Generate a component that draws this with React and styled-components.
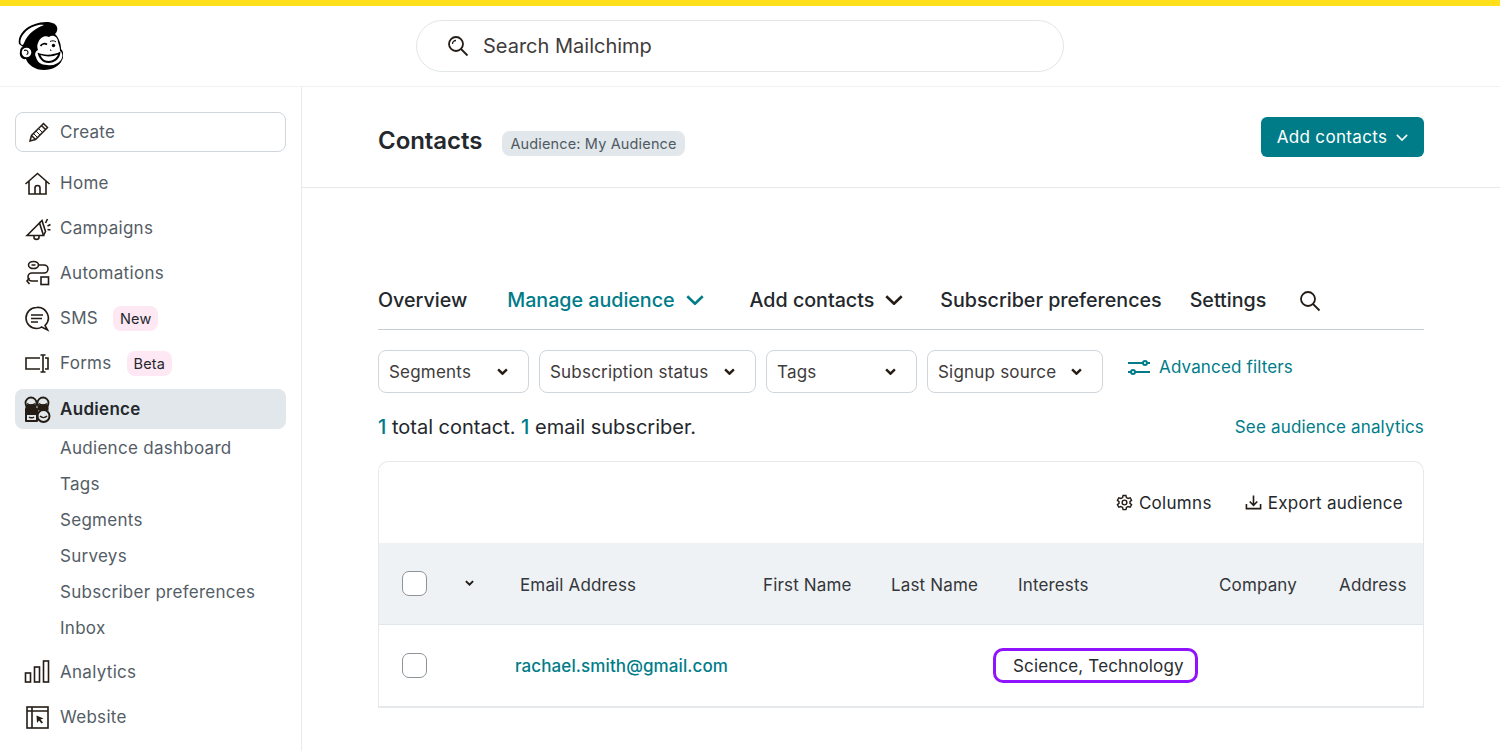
import React from "react";
import styled, { createGlobalStyle } from "styled-components";

const GlobalStyle = createGlobalStyle`
  * { box-sizing: border-box; }
  html, body { margin: 0; padding: 0; background: #fff; }
  body { font-family: Inter, "Liberation Sans", sans-serif; color: #24282c; overflow: hidden; }
`;

const teal = "#007c89";
const ink = "#241c15";
const textDark = "#24282c";

const Page = styled.div`
  width: 1500px;
  height: 751px;
  display: flex;
  flex-direction: column;
  border-top: 6px solid #ffe01b;
  overflow: hidden;
`;

const TopBar = styled.header`
  flex: 0 0 81px;
  display: flex;
  align-items: center;
  padding: 0 0 1px 17px;
  border-bottom: 1px solid #eff2f5;
`;

const LogoSlot = styled.div`
  width: 399px;
  flex: none;
  display: flex;
`;

const SearchBox = styled.div`
  width: 648px;
  height: 52px;
  border: 1px solid #e2e6e9;
  border-radius: 26px;
  display: flex;
  align-items: center;
  gap: 14px;
  padding-left: 30px;
  font-size: 20px;
  color: #403b3b;
`;

const SearchLabel = styled.span`
  padding-top: 1px;
`;

const Body = styled.div`
  flex: 1;
  display: flex;
  min-height: 0;
`;

const Sidebar = styled.nav`
  flex: 0 0 302px;
  border-right: 1px solid #e8ebed;
  padding: 25px 15px 0;
`;

const CreateButton = styled.div`
  height: 40px;
  width: 271px;
  border: 1px solid #cfd6db;
  border-radius: 8px;
  display: flex;
  align-items: center;
  gap: 10px;
  padding-left: 12px;
  margin-bottom: 11px;
  font-size: 17px;
  letter-spacing: 0.3px;
  color: #545d66;
`;

const NavItem = styled.div`
  height: 40px;
  width: 271px;
  margin-top: ${({ $active }) => ($active ? 6 : 0)}px;
  margin-bottom: ${({ $tight }) => ($tight ? 0 : 5)}px;
  border-radius: 8px;
  display: flex;
  align-items: center;
  padding-left: 9px;
  gap: 9px;
  font-size: 17px;
  letter-spacing: 0.3px;
  font-weight: ${({ $active }) => ($active ? 600 : 400)};
  color: ${({ $active }) => ($active ? textDark : "#545d66")};
  background: ${({ $active }) => ($active ? "#e1e7ea" : "transparent")};
`;

const IconSlot = styled.span`
  width: 27px;
  height: 27px;
  flex: none;
  display: flex;
`;

const NavBadge = styled.span`
  margin-left: 6px;
  height: 25px;
  padding: 0 7px;
  display: flex;
  align-items: center;
  border-radius: 8px;
  background: #fde8f4;
  color: ${textDark};
  font-size: 14.5px;
  letter-spacing: 0.1px;
`;

const SubList = styled.div`
  margin-top: 1px;
  margin-bottom: 6px;
`;

const SubItem = styled.div`
  height: 36px;
  display: flex;
  align-items: center;
  padding-left: 45px;
  font-size: 17px;
  letter-spacing: 0.28px;
  color: #545d66;
`;

const Main = styled.main`
  flex: 1;
  min-width: 0;
`;

const PageHead = styled.div`
  height: 101px;
  border-bottom: 1px solid #e6e9eb;
  padding: 0 76px 0 76px;
  display: flex;
  align-items: center;
`;

const Title = styled.h1`
  margin: 6px 20px 0 0;
  font-size: 24px;
  font-weight: 600;
  letter-spacing: -0.05px;
  color: ${textDark};
`;

const AudienceBadge = styled.span`
  margin-top: 13px;
  height: 25px;
  padding: 0 8px;
  display: flex;
  align-items: center;
  border-radius: 8px;
  background: #e1e7ea;
  color: #4f5a63;
  font-size: 14.5px;
  letter-spacing: 0.15px;
`;

const PrimaryButton = styled.div`
  margin-left: auto;
  width: 163px;
  height: 40px;
  border-radius: 6px;
  background: ${teal};
  color: #fff;
  font-size: 17px;
  letter-spacing: 0.35px;
  display: flex;
  align-items: center;
  justify-content: center;
  gap: 9px;
`;

const Content = styled.div`
  padding: 91px 76px 0;
`;

const Tabs = styled.div`
  height: 51px;
  border-bottom: 1px solid #c7ced3;
  display: flex;
  align-items: center;
  padding-bottom: 9px;
`;

const Tab = styled.div`
  display: flex;
  align-items: center;
  gap: 11px;
  font-size: 19.7px;
  font-weight: 500;
  letter-spacing: -0.02px;
  margin-right: ${({ $gap }) => $gap}px;
  color: ${({ $current }) => ($current ? teal : textDark)};
`;

const TabSearch = styled.span`
  display: flex;
  margin-top: 3px;
`;

const Filters = styled.div`
  display: flex;
  align-items: flex-start;
  gap: 10px;
  margin-top: 20px;
`;

const FilterSelect = styled.div`
  width: ${({ $w }) => $w}px;
  height: 43px;
  border: 1px solid #cfd6db;
  border-radius: 8px;
  display: flex;
  align-items: center;
  justify-content: space-between;
  padding: 0 20px 0 10px;
  font-size: 17px;
  letter-spacing: 0.2px;
  color: #403b3b;
`;

const AdvancedLink = styled.div`
  margin-left: 14px;
  height: 33px;
  display: flex;
  align-items: center;
  gap: 8px;
  font-size: 17px;
  letter-spacing: 0.15px;
  color: ${teal};
`;

const CountRow = styled.div`
  margin-top: 19px;
  height: 30px;
  display: flex;
  align-items: center;
  justify-content: space-between;
`;

const CountText = styled.div`
  font-size: 20px;
  color: ${textDark};
  b { color: ${teal}; font-weight: 500; }
`;

const AnalyticsLink = styled.div`
  font-size: 17px;
  letter-spacing: 0.17px;
  color: ${teal};
`;

const Card = styled.div`
  margin-top: 19px;
  border: 1px solid #e6e9eb;
  border-bottom-width: 2px;
  border-radius: 10px 10px 0 0;
  overflow: hidden;
`;

const CardTools = styled.div`
  height: 81px;
  display: flex;
  align-items: center;
  justify-content: flex-end;
  gap: 33px;
  padding-right: 20px;
`;

const ToolButton = styled.div`
  display: flex;
  align-items: center;
  gap: 6px;
  font-size: 17px;
  letter-spacing: 0.3px;
  color: ${textDark};
`;

const columns = "76px 60px 243px 128px 127px 201px 120px 1fr";

const HeadRow = styled.div`
  height: 82px;
  display: grid;
  grid-template-columns: ${columns};
  align-items: center;
  background: #eff2f5;
  border-bottom: 1px solid #e1e7ea;
  font-size: 17px;
  letter-spacing: 0.15px;
  color: #33363a;
`;

const DataRow = styled.div`
  height: 81px;
  display: grid;
  grid-template-columns: ${columns};
  align-items: center;
  font-size: 17px;
`;

const HeadCell = styled.div`
  padding: 2px 0 0 5px;
  white-space: nowrap;
`;

const CheckCell = styled.div`
  padding-left: 23px;
  display: flex;
`;

const CheckBox = styled.span`
  width: 25px;
  height: 25px;
  border: 1px solid #8c9399;
  border-radius: 7px;
  background: #fff;
`;

const SortCell = styled.div`
  padding-left: 10px;
  display: flex;
`;

const EmailLink = styled.div`
  font-weight: 500;
  letter-spacing: 0.1px;
  color: ${teal};
  white-space: nowrap;
`;

const InterestCell = styled.div`
  grid-column: 6;
  display: flex;
`;

const InterestTag = styled.div`
  margin-left: -20px;
  height: 35px;
  width: 205px;
  border: 3px solid #9013fe;
  border-radius: 10px;
  display: flex;
  align-items: center;
  padding-left: 17px;
  font-size: 17px;
  letter-spacing: 0.15px;
  white-space: nowrap;
  color: #2a2c30;
`;

const Stroke = ({ children, size = 27, box = "0 0 27 27", width = 1.6, color = ink, ...rest }) => (
  <svg width={size} height={size} viewBox={box} fill="none" stroke={color} strokeWidth={width} {...rest}>
    {children}
  </svg>
);

const Chevron = ({ color = ink, w = 14, h = 8, sw = 2 }) => (
  <svg width={w} height={h} viewBox="0 0 14 8" fill="none" stroke={color} strokeWidth={sw} preserveAspectRatio="none">
    <path d="M1 1l6 6 6-6" />
  </svg>
);

const SmallChevron = ({ size = 10 }) => (
  <svg width={size} height={size * 0.7} viewBox="0 0 10 7" fill="none" stroke={ink} strokeWidth="2.2">
    <path d="M1 1.2l4 4 4-4" />
  </svg>
);

const Logo = () => (
  <svg width="46" height="48" viewBox="0 0 46 48">
    <path d="M2 22C0 14 8 5 18 2c8-3 20-3 22 3 1 4-1 6-2 7 4 4 6 10 6 15 3 3 3 8 1 11-2 6-10 10-18 10-9 0-16-5-18-11-4 1-7-3-6-7 0-3 1-5 3-5z" fill="#000" />
    <path d="M3.500 21c-1-6 5.500-14 14.500-17 4-1.500 7-1.500 9-1-8 3-16 8-20 18-1 3-3 2-3.500 0z" fill="#fff" />
    <circle cx="9.500" cy="30.500" r="4.800" fill="#fff" />
    <path d="M7 28.500c2-1 4 0 4 2 0 1-1 2-1.500 2" stroke="#000" strokeWidth="1.100" fill="none" />
    <path d="M21 21c2-6 7-8 11-6 4-3 9 0 9 5 1 3 2 6 2 9 3 2 3 6 1 9-3 4-8 6-14 5-6 0-10-3-11-8-2-3 0-6 2-7-1-3-1-5 0-7z" fill="#fff" />
    <path d="M23.500 24c1.500-2.500 4.500-3 6.500-1.500" stroke="#000" strokeWidth="1.600" fill="none" />
    <circle cx="36.500" cy="23.500" r="1.700" fill="#000" />
    <path d="M33 19.500c2-1 4.500-1 6 .5" stroke="#000" strokeWidth="1" fill="none" />
    <path d="M33.500 27.500l.5 1.500" stroke="#000" strokeWidth="1" fill="none" />
    <path d="M20.500 30.500c6 3 16 3 23-1 0 7-6 11.500-12 11.500-6 0-10-5-11-10.500z" fill="#000" />
    <path d="M23.500 33c5 2 12 2 17.500-.5-1 3-5 6.500-9.500 6.500-4 0-7-3-8-6z" fill="#fff" />
  </svg>
);

const HomeIcon = () => (
  <Stroke>
    <path d="M1.500 14L13.500 3.500 25.500 14M5 11.500V24h17V11.500" />
    <path d="M11 24v-6a2.500 2.500 0 015 0v6" />
  </Stroke>
);

const CampaignsIcon = () => (
  <Stroke>
    <path d="M3 20.500L15.500 8l4 12.500z" />
    <path d="M15.500 8l2.500-2.500 3.500 11-2 4" />
    <path d="M10 20.500v2c0 2.500 5 2.500 5 0v-2" />
    <path d="M21.500 8l2-4M23.500 11l3-1.500M23.500 14.500l3 .5" />
  </Stroke>
);

const AutomationsIcon = () => (
  <Stroke>
    <ellipse cx="9.500" cy="5" rx="5" ry="3.500" />
    <path d="M7.500 5h4M15 5h5a4 4 0 010 8H8a4 4 0 000 8h6" />
    <path d="M5.500 18l-2.500 3 2.500 3" />
    <rect x="17" y="17" width="7.500" height="7.500" />
  </Stroke>
);

const SmsIcon = () => (
  <Stroke>
    <path d="M12.500 2.500a10.500 10.500 0 100 21c2 0 4-.5 5-1.500l6 3-2.500-4.500a10.500 10.500 0 00-8.500-18z" />
    <path d="M7 10h12M7 13.500h11M7 17h7" />
  </Stroke>
);

const FormsIcon = () => (
  <Stroke>
    <path d="M16 8H2v11h14M21 8h3v11h-3" />
    <path d="M16.500 5h5M19 5v17M16.500 22h5" />
  </Stroke>
);

const AudienceIcon = () => (
  <svg width="27" height="27" viewBox="0 0 27 27">
    <rect x="1" y="12" width="13" height="14" rx="1" fill="#241c15" />
    <circle cx="7" cy="7" r="5.500" fill="#e1e7ea" stroke="#241c15" strokeWidth="1.800" />
    <circle cx="19" cy="7" r="5.500" fill="#e1e7ea" stroke="#241c15" strokeWidth="1.800" />
    <path d="M3 7.500c2 2 6 2 8 0M15 7.500c2 2 6 2 8 0" stroke="#241c15" strokeWidth="1.500" fill="none" />
    <rect x="1.500" y="8.500" width="11" height="6" fill="#241c15" />
    <rect x="13.500" y="8.500" width="11" height="6" fill="#241c15" />
    <circle cx="19.500" cy="20" r="6" fill="#e1e7ea" stroke="#241c15" strokeWidth="2" />
    <path d="M16 20c2 2 5 2 7 0" stroke="#241c15" strokeWidth="1.500" fill="none" />
    <rect x="3" y="19" width="9" height="5" fill="#e1e7ea" />
    <path d="M5 21c1 1 4 1 5 0" stroke="#241c15" strokeWidth="1.300" fill="none" />
  </svg>
);

const AnalyticsIcon = () => (
  <Stroke>
    <rect x="1.500" y="14" width="5" height="9" />
    <rect x="10.500" y="8" width="5" height="15" />
    <rect x="19.500" y="2" width="5" height="21" />
  </Stroke>
);

const WebsiteIcon = () => (
  <Stroke>
    <rect x="3" y="3" width="21" height="21" />
    <path d="M3 7h21M8 3v21" />
    <path d="M12.500 11.500l7 3-3 1 2.500 3-1.500 1-2.500-3-2 2.500z" fill={ink} stroke="none" />
  </Stroke>
);

const PencilIcon = () => (
  <Stroke size={22} box="0 0 22 22" width={1.500}>
    <path d="M2 20l1.500-5.500L15.500 2.500l4 4L7.500 18.500zM3.500 14.500l4 4M13.500 4.500l4 4" />
    <path d="M5.500 12.500l4 4M8 10l4 4M10.500 7.500l4 4" strokeWidth="1" />
  </Stroke>
);

const SearchIcon = ({ arc }) => (
  <Stroke size={22} box="0 0 22 22" width={1.800} color="#241c15">
    <circle cx="9" cy="9" r="7" />
    <path d="M14 14l6.500 6.500" />
    {arc && <path d="M5.500 9a3.500 3.500 0 013.500-3.500" strokeWidth="1.300" />}
  </Stroke>
);

const SlidersIcon = () => (
  <Stroke size={24} box="0 0 24 24" width={2} color={teal}>
    <path d="M1 8h15M20 8h3M1 17h3M8 17h15" />
    <circle cx="18" cy="8" r="2" />
    <circle cx="6" cy="17" r="2" />
  </Stroke>
);

const GearIcon = () => (
  <Stroke size={17} box="0 0 18 18" width={1.500}>
    <path d="M7.500 1.500h3l.5 2.200 1.800 1 2.200-.7 1.500 2.600-1.700 1.500v1.800l1.700 1.500-1.500 2.600-2.200-.7-1.800 1-.5 2.200h-3L7 14.300l-1.800-1-2.200.7-1.500-2.600 1.700-1.500V8.100L1.500 6.600 3 4l2.200.7 1.800-1z" />
    <circle cx="9" cy="9" r="2.500" />
  </Stroke>
);

const ExportIcon = () => (
  <Stroke size={17} box="0 0 18 18" width={1.700}>
    <path d="M9 1.500v10M5 8l4 4 4-4" />
    <path d="M1.500 10.500v5h15v-5" />
  </Stroke>
);

const navTop = [
  { label: "Home", icon: <HomeIcon /> },
  { label: "Campaigns", icon: <CampaignsIcon /> },
  { label: "Automations", icon: <AutomationsIcon /> },
  { label: "SMS", icon: <SmsIcon />, badge: "New" },
  { label: "Forms", icon: <FormsIcon />, badge: "Beta" },
];

const subItems = ["Audience dashboard", "Tags", "Segments", "Surveys", "Subscriber preferences", "Inbox"];

const filters = [
  { label: "Segments", w: 151 },
  { label: "Subscription status", w: 217 },
  { label: "Tags", w: 151 },
  { label: "Signup source", w: 176 },
];

const App = () => (
  <>
    <GlobalStyle />
    <Page>
      <TopBar>
        <LogoSlot>
          <Logo />
        </LogoSlot>
        <SearchBox>
          <SearchIcon arc />
          <SearchLabel>Search Mailchimp</SearchLabel>
        </SearchBox>
      </TopBar>
      <Body>
        <Sidebar>
          <CreateButton>
            <PencilIcon />
            Create
          </CreateButton>
          {navTop.map((item) => (
            <NavItem key={item.label}>
              <IconSlot>{item.icon}</IconSlot>
              {item.label}
              {item.badge && <NavBadge>{item.badge}</NavBadge>}
            </NavItem>
          ))}
          <NavItem $active $tight>
            <IconSlot>
              <AudienceIcon />
            </IconSlot>
            Audience
          </NavItem>
          <SubList>
            {subItems.map((label) => (
              <SubItem key={label}>{label}</SubItem>
            ))}
          </SubList>
          <NavItem>
            <IconSlot>
              <AnalyticsIcon />
            </IconSlot>
            Analytics
          </NavItem>
          <NavItem>
            <IconSlot>
              <WebsiteIcon />
            </IconSlot>
            Website
          </NavItem>
        </Sidebar>
        <Main>
          <PageHead>
            <Title>Contacts</Title>
            <AudienceBadge>Audience: My Audience</AudienceBadge>
            <PrimaryButton>
              Add contacts
              <Chevron color="#fff" w={12} h={7} sw={1.800} />
            </PrimaryButton>
          </PageHead>
          <Content>
            <Tabs>
              <Tab $gap={40}>Overview</Tab>
              <Tab $gap={46} $current>
                Manage audience
                <Chevron color={teal} w={18} h={10} sw={2} />
              </Tab>
              <Tab $gap={37}>
                Add contacts
                <Chevron w={18} h={10} sw={2} />
              </Tab>
              <Tab $gap={28}>Subscriber preferences</Tab>
              <Tab $gap={33}>Settings</Tab>
              <TabSearch>
                <SearchIcon />
              </TabSearch>
            </Tabs>
            <Filters>
              {filters.map((f) => (
                <FilterSelect key={f.label} $w={f.w}>
                  {f.label}
                  <SmallChevron size={11} />
                </FilterSelect>
              ))}
              <AdvancedLink>
                <SlidersIcon />
                Advanced filters
              </AdvancedLink>
            </Filters>
            <CountRow>
              <CountText>
                <b>1</b> total contact. <b>1</b> email subscriber.
              </CountText>
              <AnalyticsLink>See audience analytics</AnalyticsLink>
            </CountRow>
            <Card>
              <CardTools>
                <ToolButton>
                  <GearIcon />
                  Columns
                </ToolButton>
                <ToolButton>
                  <ExportIcon />
                  Export audience
                </ToolButton>
              </CardTools>
              <HeadRow>
                <CheckCell>
                  <CheckBox />
                </CheckCell>
                <SortCell>
                  <SmallChevron size={9} />
                </SortCell>
                <HeadCell>Email Address</HeadCell>
                <HeadCell>First Name</HeadCell>
                <HeadCell>Last Name</HeadCell>
                <HeadCell>Interests</HeadCell>
                <HeadCell>Company</HeadCell>
                <HeadCell>Address</HeadCell>
              </HeadRow>
              <DataRow>
                <CheckCell>
                  <CheckBox />
                </CheckCell>
                <span />
                <EmailLink>rachael.smith@gmail.com</EmailLink>
                <InterestCell>
                  <InterestTag>Science, Technology</InterestTag>
                </InterestCell>
              </DataRow>
            </Card>
          </Content>
        </Main>
      </Body>
    </Page>
  </>
);

export default App;
